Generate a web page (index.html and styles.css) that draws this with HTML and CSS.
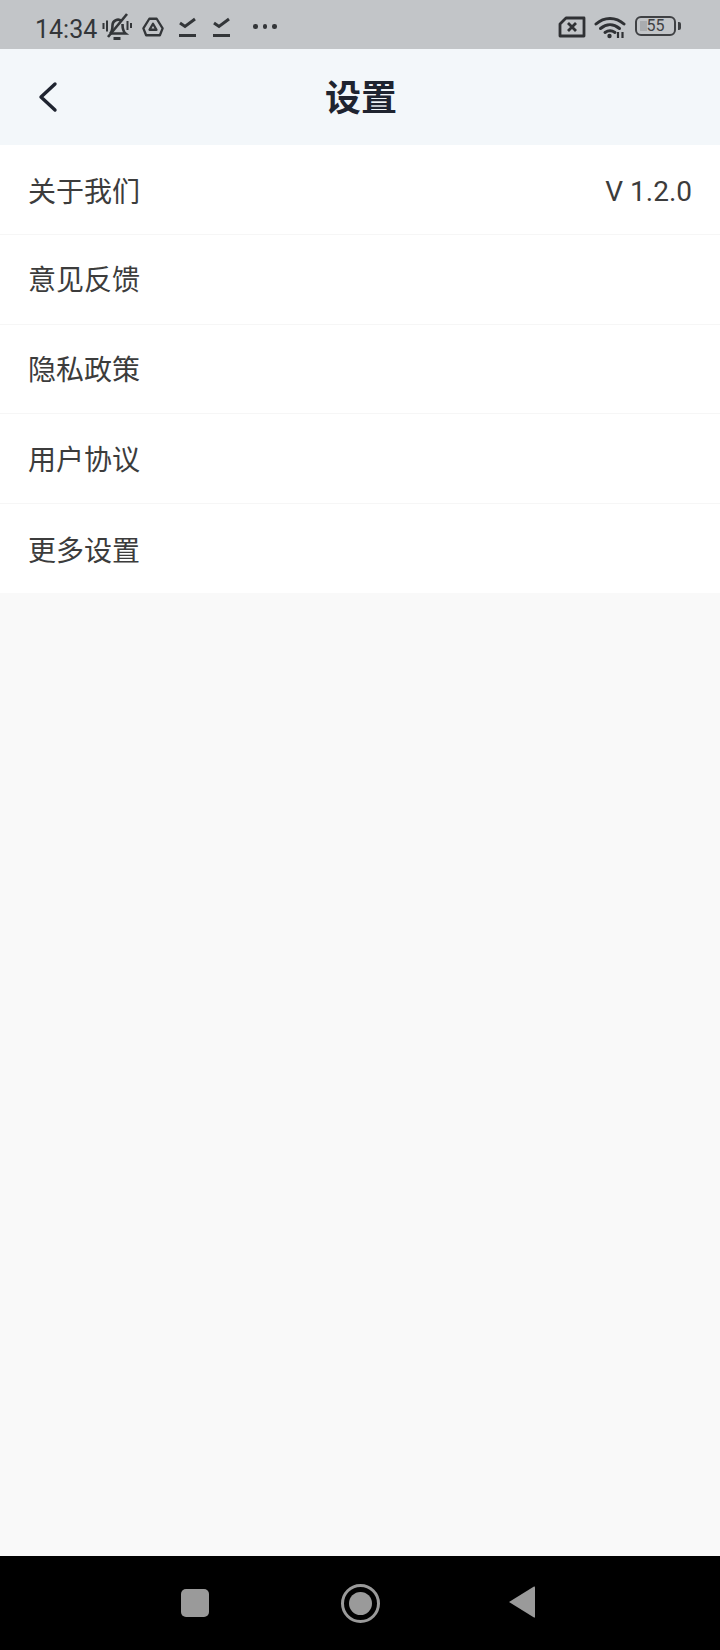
FILE: index.html
```html
<!DOCTYPE html>
<html lang="zh-CN">
<head>
<meta charset="utf-8">
<title>设置</title>
<link rel="stylesheet" href="styles.css">
</head>
<body>
<div class="screen">
  <div class="statusbar">
    <span class="clock">14:34</span>
    <div class="status-left">
      <svg class="ico bell" viewBox="0 0 30 30" fill="none" stroke="#333639" stroke-width="2.600">
        <path d="M8 21.500c2.500-2 2.500-5 2.500-8.500a5.500 5.500 0 0 1 9-4M20.500 12c0 4.500.5 7.500 3 9.500H8" />
        <path d="M6 25 25 2" />
        <path d="M11.500 26.500h7" stroke-width="3"/>
        <path d="M1.500 11v6M5 8.500v11M25.500 9v9M29 11v5" stroke-width="2"/>
      </svg>
      <svg class="ico drive" viewBox="0 0 24 24" fill="none" stroke="#333639" stroke-width="2.500" stroke-linejoin="round">
        <path d="M8 3h8l6.500 10.500L19.500 21h-15L1.500 13.500z"/>
        <path d="M12 8.500l3.800 6.500H8.200z"/>
      </svg>
      <svg class="ico tick" viewBox="0 0 18 22" fill="none" stroke="#333639" stroke-width="3">
        <path d="M1 7l5 3.500L16 3"/>
        <path d="M0 19.500h17"/>
      </svg>
      <svg class="ico tick tick-second" viewBox="0 0 18 22" fill="none" stroke="#333639" stroke-width="3">
        <path d="M1 7l5 3.500L16 3"/>
        <path d="M0 19.500h17"/>
      </svg>
      <div class="dots"><i></i><i></i><i></i></div>
    </div>
    <div class="status-right">
      <svg class="ico sim" viewBox="0 0 28 22" fill="none" stroke="#2f3134" stroke-width="2.800" stroke-linejoin="round">
        <path d="M8 2h18v18H2V8z"/>
        <path d="M10 7l8 8M18 7l-8 8"/>
      </svg>
      <svg class="ico wifi" viewBox="0 0 32 24" fill="none" stroke="#2f3134" stroke-width="3" stroke-linecap="round">
        <path d="M2 9c8-7.500 20-7.500 28 0"/>
        <path d="M6.500 13.500c6-5 13-5 19 0"/>
        <path d="M11 17.500c3.500-2.500 6.500-2.500 10 0"/>
        <circle cx="15.500" cy="21" r="2.200" fill="#2f3134" stroke="none"/>
        <path d="M24 17v6M28.500 17v6" stroke-width="2.200" stroke-linecap="butt"/>
      </svg>
      <div class="battery">
        <div class="battery-body"><span class="battery-fill"></span><span class="battery-num">55</span></div>
        <span class="battery-cap"></span>
      </div>
    </div>
  </div>

  <header class="navbar">
    <svg class="back" viewBox="0 0 20 32" fill="none" stroke="#1f2430" stroke-width="3.400" stroke-linecap="round" stroke-linejoin="round">
      <path d="M17 3 3 16l14 13"/>
    </svg>
    <h1 class="title">设置</h1>
  </header>

  <ul class="menu">
    <li class="row"><span>关于我们</span><span class="version">V 1.2.0</span></li>
    <li class="row"><span>意见反馈</span></li>
    <li class="row"><span>隐私政策</span></li>
    <li class="row"><span>用户协议</span></li>
    <li class="row"><span>更多设置</span></li>
  </ul>

  <main class="blank"></main>

  <nav class="softkeys">
    <span class="key-recent"></span>
    <span class="key-home"><i></i></span>
    <svg class="key-back" viewBox="0 0 28 34"><path d="M1 17 26 1.500q1-.5 1 1v29q0 1.500-1 1z" fill="#9a9a9a"/></svg>
  </nav>
</div>
</body>
</html>
```
FILE: styles.css
```css
* { box-sizing: border-box; }
html, body { margin: 0; padding: 0; }
body {
  font-family: Roboto, "Noto Sans CJK SC", sans-serif;
  background: #f9f9f9;
}
.screen {
  width: 720px;
  height: 1650px;
  display: flex;
  flex-direction: column;
}

/* status bar */
.statusbar {
  height: 49px;
  background: #c2c5c8;
  display: flex;
  align-items: center;
  padding: 4px 39px 0 35px;
  color: #333639;
}
.clock { font-size: 25px; line-height: 1; margin-top: 6px; }
.status-left { display: flex; align-items: center; margin-left: 5px; flex: 1; }
.status-right { display: flex; align-items: center; }
.ico { display: block; }
.bell { width: 30px; height: 30px; }
.drive { width: 22px; height: 22px; margin-left: 10px; }
.tick { width: 18px; height: 22px; margin-left: 15px; }
.tick-second { margin-left: 16px; }
.dots { display: flex; gap: 5px; margin-left: 22px; }
.dots i { width: 4.500px; height: 4.500px; border-radius: 50%; background: #333639; }
.sim { width: 28px; height: 22px; margin-left: 1px; }
.wifi { width: 32px; height: 24px; margin-left: 8px; }
.battery { display: flex; align-items: center; margin-left: 9px; margin-top: -1px; }
.battery-body {
  width: 41px;
  height: 20px;
  border: 2px solid #3f4144;
  border-radius: 6px;
  display: flex;
  align-items: center;
  justify-content: center;
  position: relative;
}
.battery-fill {
  position: absolute;
  left: 3px;
  top: 3px;
  bottom: 3px;
  width: 7px;
  background: #a9acaf;
}
.battery-num { position: relative; font-size: 16px; line-height: 1; color: #3f4144; }
.battery-cap { width: 3px; height: 8px; margin-left: 2px; background: #3f4144; border-radius: 0 2px 2px 0; }

/* navigation bar */
.navbar {
  height: 96px;
  background: #f3f7fa;
  display: flex;
  align-items: center;
  justify-content: center;
  padding: 4px 0 0 2px;
  position: relative;
}
.back { position: absolute; left: 38px; top: 32px; width: 20px; height: 32px; }
.title { margin: 0; font-size: 36px; font-weight: 700; color: #1f2430; line-height: 1; }

/* menu list */
.menu { list-style: none; margin: 0; padding: 0; background: #fff; }
.row {
  height: 89.800px;
  display: flex;
  align-items: center;
  justify-content: space-between;
  padding: 0 28px 2px 28px;
  font-size: 28px;
  color: #3c3c3c;
  border-bottom: 1px solid #f6f6f6;
}
.row:first-child { padding-top: 2px; padding-bottom: 0; }
.row:last-child { border-bottom: 0; height: 89px; padding-bottom: 0; }
.version { font-size: 28px; padding-top: 2px; }

.blank { flex: 1; background: #f9f9f9; }

/* android soft keys */
.softkeys {
  height: 94px;
  background: #000;
  position: relative;
  flex: none;
}
.key-recent {
  position: absolute; left: 181px; top: 33px;
  width: 28px; height: 28px;
  border-radius: 5px;
  background: #9a9a9a;
}
.key-home {
  position: absolute; left: 341px; top: 28px;
  width: 39px; height: 39px;
  border: 3px solid #9a9a9a;
  border-radius: 50%;
  display: flex; align-items: center; justify-content: center;
}
.key-home i { width: 23px; height: 23px; border-radius: 50%; background: #9a9a9a; }
.key-back { position: absolute; left: 508px; top: 29px; width: 28px; height: 34px; }
```
